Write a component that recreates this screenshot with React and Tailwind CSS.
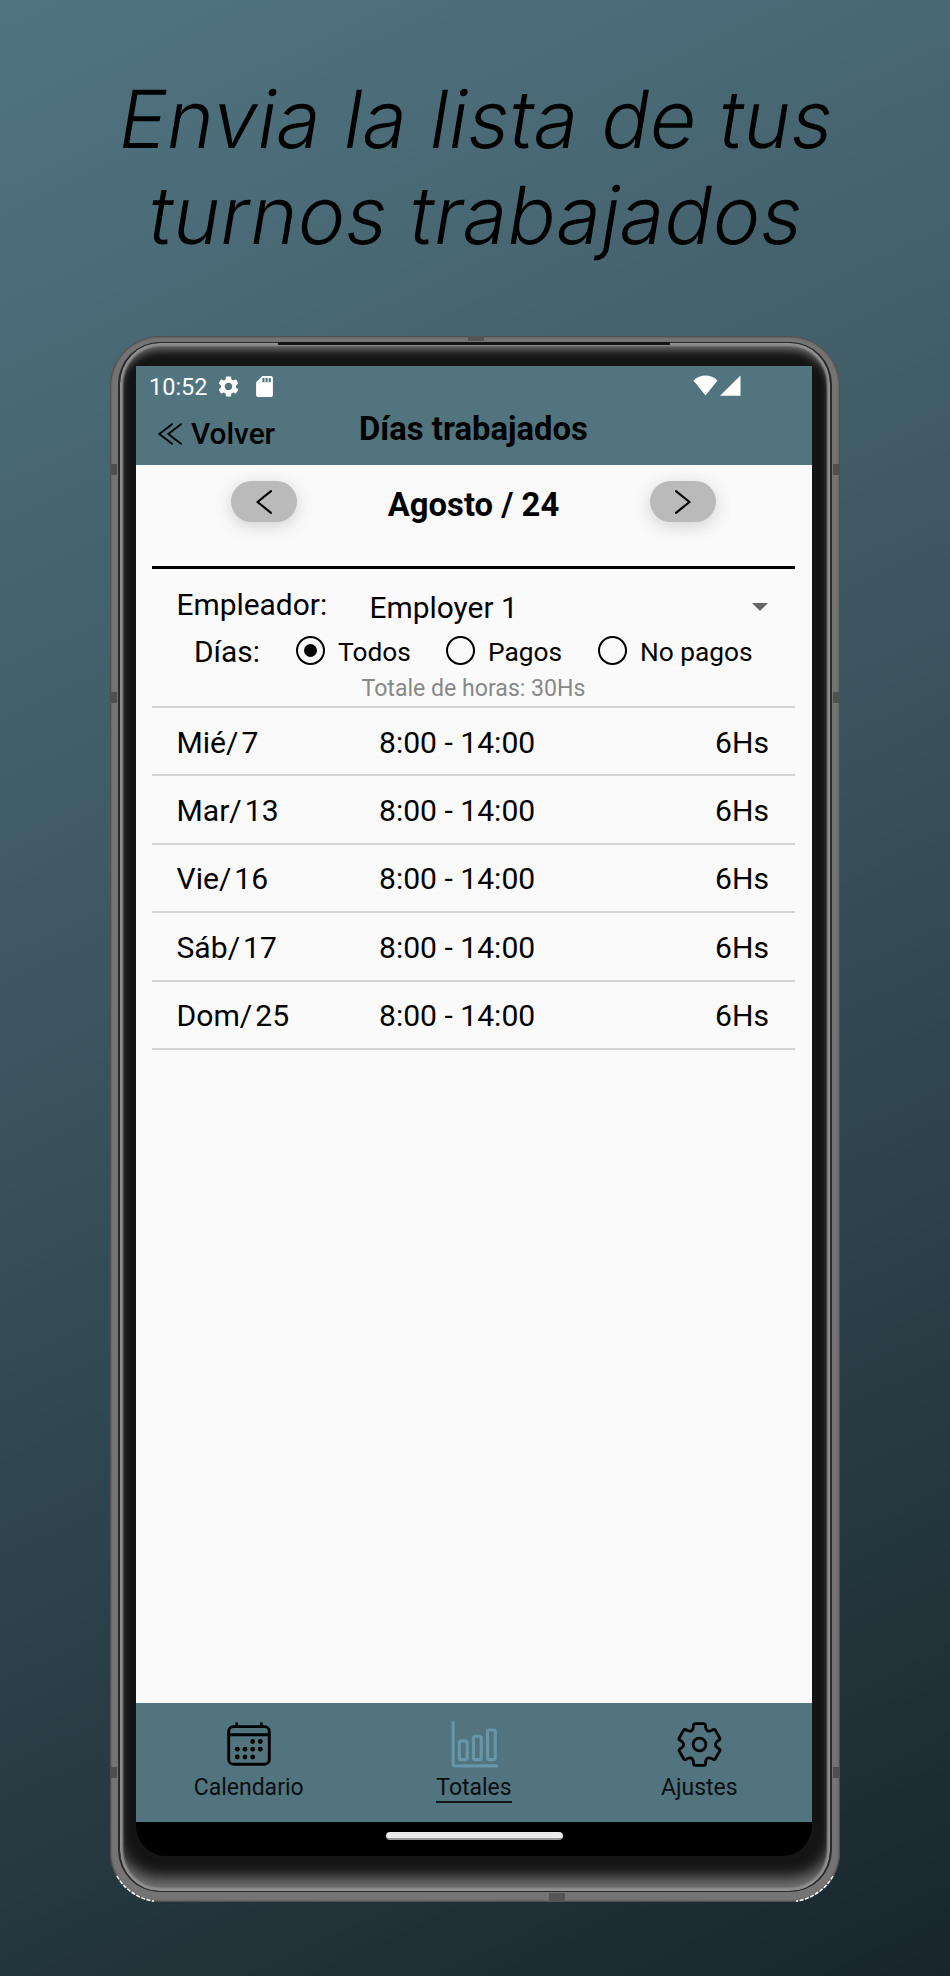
import React from "react";
import { IoBarChartOutline } from "react-icons/io5";

const shifts = [
  { day: "Mié", date: 7 },
  { day: "Mar", date: 13 },
  { day: "Vie", date: 16 },
  { day: "Sáb", date: 17 },
  { day: "Dom", date: 25 },
];

function gearPath() {
  const turn = ([x, y], k) => {
    const a = (k * Math.PI) / 3;
    return [x * Math.cos(a) - y * Math.sin(a), x * Math.sin(a) + y * Math.cos(a)]
      .map((n) => n.toFixed(1))
      .join(" ");
  };
  let d = "";
  for (let k = 0; k < 6; k++) {
    d += `${k ? "L" : "M"}${turn([-13, -62], k)} L${turn([13, -62], k)} Q${turn([17, -62], k)} ${turn([17.5, -58], k)} L${turn([18.5, -50], k)} Q${turn([21, -36.4], k)} ${turn([34, -41], k)} L${turn([41, -44.5], k)} Q${turn([45, -46], k)} ${turn([47, -42.5], k)} `;
  }
  return d + "Z";
}

function GearOutline() {
  return (
    <svg viewBox="-67 -67 134 134" className="h-[45px] w-[45px]" fill="none" stroke="#000" strokeWidth="8.5" strokeLinejoin="round">
      <path d={gearPath()} />
      <circle r="19" />
    </svg>
  );
}

function CalendarIcon() {
  const dots = [
    [25.7, 19.5], [33.3, 19.5],
    [10.3, 27.2], [18, 27.2], [25.7, 27.2], [33.3, 27.2],
    [10.3, 35], [18, 35], [25.7, 35],
  ];
  return (
    <svg viewBox="0 0 44 44" className="h-11 w-11" fill="none" stroke="#000" strokeWidth="2.9" strokeLinecap="round">
      <rect x="1.7" y="4.6" width="40.6" height="37.6" rx="4.8" />
      <path d="M1.7 12.7H42.3M9.7 1.7V4.6M34.3 1.7V4.6" />
      {dots.map(([x, y]) => (
        <circle key={`${x}-${y}`} cx={x} cy={y} r="2.4" fill="#000" stroke="none" />
      ))}
    </svg>
  );
}

function StatusBar() {
  return (
    <div className="flex h-[41px] items-center pl-[13px] pr-[71px] text-white">
      <span className="mt-[2px] w-[69px] text-[23.5px] leading-none">10:52</span>
      <svg viewBox="2 2 20 20" className="h-[21px] w-[21px]" fill="#fff">
        <path d="M19.14 12.94c.04-.3.06-.61.06-.94 0-.32-.02-.64-.07-.94l2.03-1.58c.18-.14.23-.41.12-.61l-1.92-3.32c-.12-.22-.37-.29-.59-.22l-2.39.96c-.5-.38-1.03-.7-1.62-.94l-.36-2.54c-.04-.24-.24-.41-.48-.41h-3.84c-.24 0-.43.17-.47.41l-.36 2.54c-.59.24-1.13.57-1.62.94l-2.39-.96c-.22-.08-.47 0-.59.22L2.74 8.87c-.12.21-.08.47.12.61l2.03 1.58c-.05.3-.09.63-.09.94s.02.64.07.94l-2.03 1.58c-.18.14-.23.41-.12.61l1.92 3.32c.12.22.37.29.59.22l2.39-.96c.5.38 1.03.7 1.62.94l.36 2.54c.05.24.24.41.48.41h3.84c.24 0 .44-.17.47-.41l.36-2.54c.59-.24 1.13-.56 1.62-.94l2.39.96c.22.08.47 0 .59-.22l1.92-3.32c.12-.22.07-.47-.12-.61l-2.01-1.58zM12 15.6c-1.98 0-3.6-1.62-3.6-3.6s1.62-3.6 3.6-3.6 3.6 1.62 3.6 3.6-1.62 3.6-3.6 3.6z" />
      </svg>
      <svg viewBox="4 2 16 20" className="ml-[17px] h-[21px] w-[17px]" fill="#fff">
        <path d="M18 2h-8L4.020 8 4 20c0 1.100.9 2 2 2h12c1.100 0 2-.9 2-2V4c0-1.100-.9-2-2-2zm-6 6h-2V4h2v4zm3 0h-2V4h2v4zm3 0h-2V4h2v4z" />
      </svg>
      <svg viewBox="0 0 48 21" className="mb-[2px] ml-auto h-[21px] w-12" fill="#fff">
        <path d="M0.500 5.500C7 -1.300 18 -1.300 24.500 5.500L12.500 20.500Z" />
        <path d="M47.500 0.500V20.800H27Z" />
      </svg>
    </div>
  );
}

function MonthButton({ d }) {
  return (
    <button className="flex h-[41px] w-[66px] items-center justify-center rounded-full bg-[#bababa] shadow-[0_4px_18px_rgba(0,0,0,0.17)]">
      <svg viewBox="0 0 16 24" className="h-6 w-4" fill="none" stroke="#000" strokeWidth="2.2" strokeLinecap="round" strokeLinejoin="round">
        <path d={d} />
      </svg>
    </button>
  );
}

function Radio({ label, checked, className }) {
  return (
    <div className={`flex items-center ${className}`}>
      <span className="flex h-[29px] w-[29px] items-center justify-center rounded-full border-[2.5px] border-black">
        {checked && <span className="h-[13px] w-[13px] rounded-full bg-black" />}
      </span>
      <span className="ml-[13px] mt-[3px] whitespace-nowrap text-[26.3px] leading-none">{label}</span>
    </div>
  );
}

function Tab({ icon, label, active }) {
  return (
    <div className="flex flex-1 flex-col items-center pt-[18px]">
      <div className="flex h-[46px] items-center justify-center">{icon}</div>
      <span className={`mt-[5px] h-[31px] text-[23px] leading-[31px] text-[#0b0f12] ${active ? "border-b-2 border-[#10181c]" : ""}`}>
        {label}
      </span>
    </div>
  );
}

function Screen() {
  return (
    <div className="flex h-[1490px] w-[676px] flex-col overflow-hidden rounded-b-[30px] bg-black">
      <header className="h-[99px] bg-[#51747f]">
        <StatusBar />
        <div className="flex items-start pl-[22px]">
          <div className="mt-[7px] flex w-[201px] items-center">
            <svg viewBox="0 0 24 22" className="h-[22px] w-6" fill="none" stroke="#000" strokeWidth="1.900" strokeLinecap="round">
              <path d="M14 1.200L1.300 11L14 20.800M23 1.200L10.300 11L23 20.800" />
            </svg>
            <span className="ml-[9px] text-[29.8px] font-medium leading-10">Volver</span>
          </div>
          <h2 className="mt-[2px] whitespace-nowrap text-[32.8px] font-bold leading-10">Días trabajados</h2>
        </div>
      </header>

      <main className="flex-1 bg-[#fafafa] pl-4 pr-[17px] pt-4">
        <div className="flex h-[85px] items-start justify-between pl-[79px] pr-[79px]">
          <MonthButton d="M15 1.200L1.500 12L15 22.800" />
          <h3 className="mt-1 text-[32.8px] font-bold leading-10">Agosto / 24</h3>
          <MonthButton d="M1 1.200L14.500 12L1 22.800" />
        </div>
        <div className="h-[3px] bg-black" />
        <div className="flex h-[63px] items-start pl-[24.500px] pr-[27px] pt-[16px] text-[29.9px] leading-10">
          <span className="w-[193px]">Empleador:</span>
          <span className="mt-[3px]">Employer 1</span>
          <svg viewBox="0 0 16 8" className="ml-auto mt-[18px] h-2 w-4" fill="#666">
            <path d="M0 0H16L8 8Z" />
          </svg>
        </div>
        <div className="flex h-[38px] items-center pl-[42px]">
          <span className="mt-[2px] w-[102px] text-[29.9px] leading-none">Días:</span>
          <Radio label="Todos" checked className="w-[150px]" />
          <Radio label="Pagos" className="w-[152px]" />
          <Radio label="No pagos" className="" />
        </div>
        <p className="h-9 text-center text-[23.1px] leading-[37px] text-[#888]">Totale de horas: 30Hs</p>
        <ul className="border-t-2 border-[#d3d3d3] text-[30.1px]">
          {shifts.map((s) => (
            <li key={s.date} className="flex h-[68.4px] items-center border-b-2 border-[#d3d3d3] pl-[24.500px] pr-[26px] pt-[3px] leading-none">
              <span className="flex w-[202.500px] gap-[3px]">
                <span>{s.day}/</span>
                <span>{s.date}</span>
              </span>
              <span>8:00 - 14:00</span>
              <span className="ml-auto">6Hs</span>
            </li>
          ))}
        </ul>
      </main>

      <nav className="flex h-[119px] bg-[#51747f]">
        <Tab icon={<CalendarIcon />} label="Calendario" />
        <Tab icon={<IoBarChartOutline className="ml-[2px]" size={50} color="#6796aa" />} label="Totales" active />
        <Tab icon={<GearOutline />} label="Ajustes" />
      </nav>
      <div className="flex h-[34px] justify-center pt-[10px]">
        <div className="h-2 w-[177px] rounded-full border-b-2 border-[#999] bg-[#ececec]" />
      </div>
    </div>
  );
}

export default function App() {
  return (
    <div className="flex h-[1976px] w-[950px] flex-col items-center overflow-hidden bg-[linear-gradient(155deg,#507581_0%,#3e5863_40%,#18262c_100%)] font-['Roboto',sans-serif] text-black">
      <h1 className="flex h-[336px] flex-col items-center whitespace-nowrap pl-[3px] pt-[71px] font-['Inter',sans-serif] text-[80px] font-light leading-[96px] tracking-[0.33px]">
        <span className="-skew-x-[9.4deg]">Envia la lista de tus</span>
        <span className="-skew-x-[9.4deg]">turnos trabajados</span>
      </h1>
      <div className="relative h-[1566px] w-[730px] rounded-[50px] bg-[#747474] px-2 pb-[10px] pt-[6px] shadow-[inset_0_0_2px_1px_#444]">
        <div className="h-full w-full rounded-[42px] border border-x-2 border-[#2b2b2b] bg-[#141414] pl-4 pt-[23px] shadow-[inset_0_0_2px_3px_#909090,inset_0_9px_8px_-2px_#707070,inset_0_-18px_15px_-5px_#787878]">
          <Screen />
        </div>
        <div className="absolute left-[168px] top-[6px] h-[3px] w-[392px] bg-[#151515]" />
        <div className="absolute left-[358px] top-0 h-[5px] w-4 bg-[#555]" />
        <div className="absolute bottom-0 left-[439px] h-[9px] w-4 bg-[#555]" />
        <div className="absolute left-0 top-[128px] h-[11px] w-[7px] bg-[#505050]" />
        <div className="absolute right-0 top-[128px] h-[11px] w-[7px] bg-[#505050]" />
        <div className="absolute left-0 top-[356px] h-[11px] w-[7px] bg-[#505050]" />
        <div className="absolute right-0 top-[356px] h-[11px] w-[7px] bg-[#505050]" />
        <div className="absolute left-0 top-[1431px] h-[11px] w-[7px] bg-[#505050]" />
        <div className="absolute right-0 top-[1431px] h-[11px] w-[7px] bg-[#505050]" />
        <svg viewBox="0 0 730 50" className="absolute bottom-0 left-0 h-[50px] w-[730px]" fill="none" stroke="#fff" strokeWidth="1.500" strokeDasharray="4 1.500">
          <path d="M7 24A50 50 0 0 0 44 49M723 24A50 50 0 0 1 686 49" />
        </svg>
      </div>
    </div>
  );
}
